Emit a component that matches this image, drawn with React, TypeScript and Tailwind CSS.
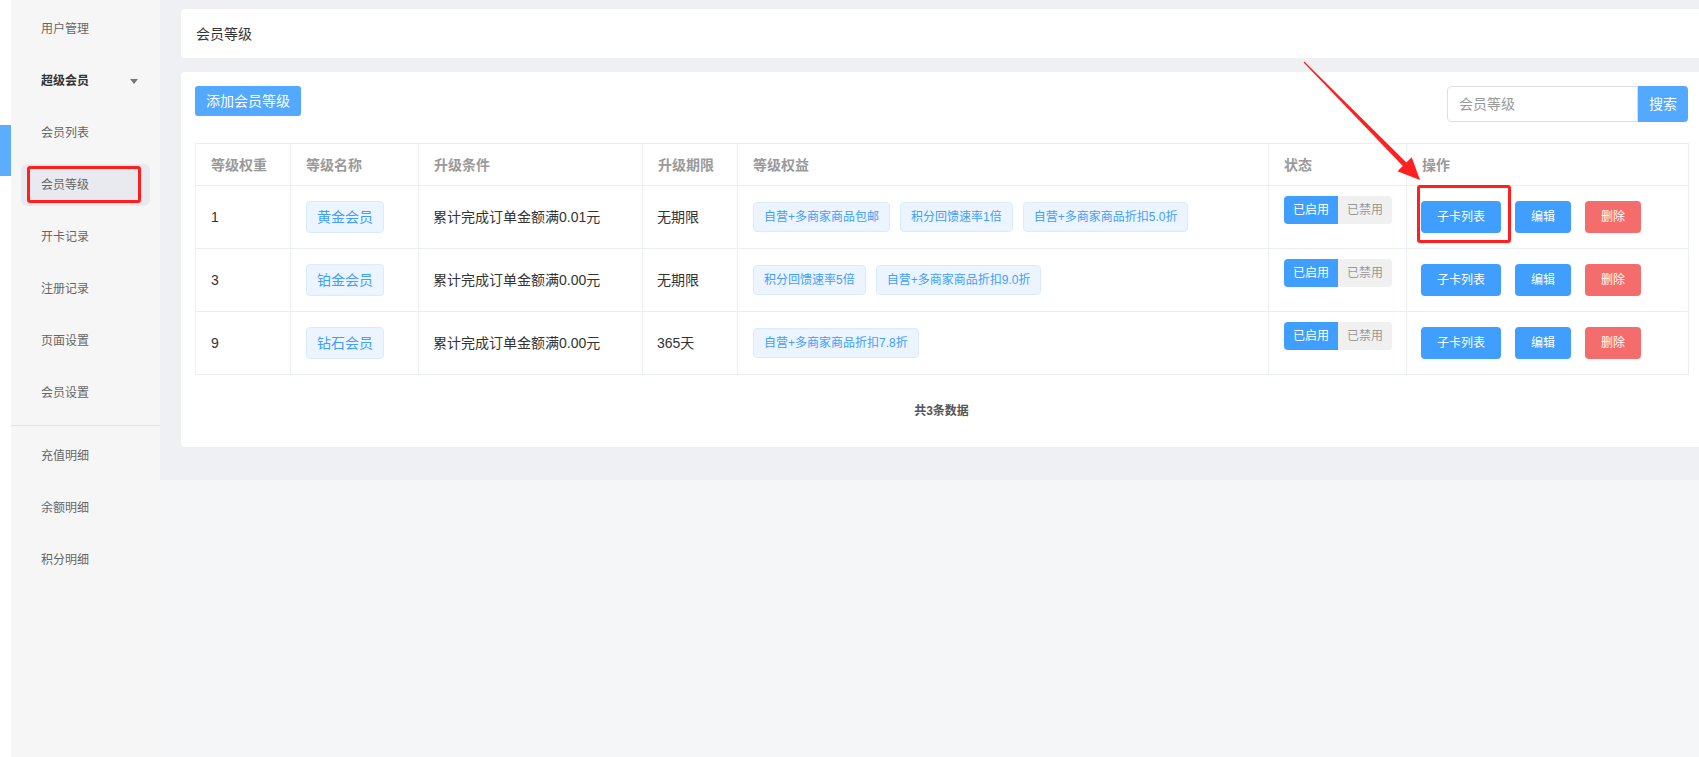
import React from "react";

type Level = {
  weight: string;
  name: string;
  condition: string;
  period: string;
  benefits: string[];
};

const levels: Level[] = [
  {
    weight: "1",
    name: "黄金会员",
    condition: "累计完成订单金额满0.01元",
    period: "无期限",
    benefits: ["自营+多商家商品包邮", "积分回馈速率1倍", "自营+多商家商品折扣5.0折"],
  },
  {
    weight: "3",
    name: "铂金会员",
    condition: "累计完成订单金额满0.00元",
    period: "无期限",
    benefits: ["积分回馈速率5倍", "自营+多商家商品折扣9.0折"],
  },
  {
    weight: "9",
    name: "钻石会员",
    condition: "累计完成订单金额满0.00元",
    period: "365天",
    benefits: ["自营+多商家商品折扣7.8折"],
  },
];

const topMenu = ["用户管理", "超级会员", "会员列表", "会员等级", "开卡记录", "注册记录", "页面设置", "会员设置"];
const bottomMenu = ["充值明细", "余额明细", "积分明细"];

const columns = [
  { label: "等级权重", width: 95 },
  { label: "等级名称", width: 128 },
  { label: "升级条件", width: 224 },
  { label: "升级期限", width: 95 },
  { label: "等级权益", width: 531 },
  { label: "状态", width: 138 },
  { label: "操作", width: 282 },
];

function MenuItem({ label }: { label: string }) {
  const isGroup = label === "超级会员";
  const isActive = label === "会员等级";

  return (
    <div className="flex h-[52px] items-center">
      <div
        className={`relative ml-[10px] flex h-[42px] w-[129px] items-center justify-between rounded-[6px] pl-[20px] pr-[12px] text-[12px] leading-[16px] ${
          isGroup ? "font-bold text-[#333]" : "text-[#666]"
        } ${isActive ? "bg-[#e9eaef] text-[#333]" : ""}`}
      >
        <span>{label}</span>
        {isGroup && (
          <svg width="8" height="5" viewBox="0 0 8 5" aria-hidden="true">
            <path d="M0 0h8L4 5z" fill="#777" />
          </svg>
        )}
        {isActive && (
          <span className="pointer-events-none absolute left-[6px] top-[2px] h-[37px] w-[114px] rounded-[3px] border-[3px] border-[#ff1f1f]" />
        )}
      </div>
    </div>
  );
}

function Sidebar() {
  return (
    <aside className="w-[149px] shrink-0 bg-[#f6f6f7] pt-[3px]">
      {topMenu.map((label) => (
        <MenuItem key={label} label={label} />
      ))}
      <div className="mb-[4px] mt-[6px] h-px bg-[#e2e2e2]" />
      {bottomMenu.map((label) => (
        <MenuItem key={label} label={label} />
      ))}
    </aside>
  );
}

function LevelsTable() {
  return (
    <table className="w-[1493px] table-fixed border-collapse text-left">
      <colgroup>
        {columns.map((col) => (
          <col key={col.label} style={{ width: col.width }} />
        ))}
      </colgroup>
      <thead>
        <tr className="h-[42px]">
          {columns.map((col) => (
            <th
              key={col.label}
              className="border border-[#ebeef5] px-[15px] text-[14px] font-bold leading-[20px] text-[#9a9a9a]"
            >
              {col.label}
            </th>
          ))}
        </tr>
      </thead>
      <tbody className="text-[14px] leading-[20px] text-[#333]">
        {levels.map((level, index) => (
          <tr key={level.name} className="h-[63px]">
            <td className="border border-[#ebeef5] px-[15px]">{level.weight}</td>
            <td className="border border-[#ebeef5] px-[15px]">
              <span className="inline-flex h-[32px] items-center rounded-[4px] border border-[#d9ecff] bg-[#ecf5ff] px-[10px] text-[#409eff]">
                {level.name}
              </span>
            </td>
            <td className="border border-[#ebeef5] px-[14px]">{level.condition}</td>
            <td className="border border-[#ebeef5] px-[14px]">{level.period}</td>
            <td className="border border-[#ebeef5] px-[15px]">
              <div className="flex flex-wrap gap-[10px]">
                {level.benefits.map((benefit) => (
                  <span
                    key={benefit}
                    className="inline-flex h-[30px] items-center rounded-[4px] border border-[#d9ecff] bg-[#ecf5ff] px-[10px] text-[12px] text-[#409eff]"
                  >
                    {benefit}
                  </span>
                ))}
              </div>
            </td>
            <td className="border border-[#ebeef5] px-[15px]">
              <div className="mb-[14px] inline-flex overflow-hidden rounded-[4px] text-[12px]">
                <span className="flex h-[28px] w-[54px] items-center justify-center bg-[#409eff] text-white">
                  已启用
                </span>
                <span className="flex h-[28px] w-[54px] items-center justify-center bg-[#f0f0f0] text-[#999]">
                  已禁用
                </span>
              </div>
            </td>
            <td className="border border-[#ebeef5] px-[14px]">
              <div className="flex gap-[14px] text-[12px] text-white">
                <span className="relative">
                  <button
                    type="button"
                    className="h-[32px] w-[80px] rounded-[4px] bg-[#409eff]"
                  >
                    子卡列表
                  </button>
                  {index === 0 && (
                    <span className="pointer-events-none absolute -left-[4px] -top-[16px] h-[58px] w-[94px] rounded-[3px] border-[3px] border-[#ff1f1f]" />
                  )}
                </span>
                <button type="button" className="h-[32px] w-[56px] rounded-[4px] bg-[#409eff]">
                  编辑
                </button>
                <button type="button" className="h-[32px] w-[56px] rounded-[4px] bg-[#f56c6c]">
                  删除
                </button>
              </div>
            </td>
          </tr>
        ))}
      </tbody>
    </table>
  );
}

export default function App() {
  return (
    <div className="relative flex h-[757px] w-full overflow-hidden bg-white font-['Liberation_Sans','Noto_Sans_CJK_SC',sans-serif]">
      <div className="w-[11px] shrink-0 bg-white">
        <div className="mt-[125px] h-[51px] bg-[#5cadfb]" />
      </div>
      <Sidebar />
      <main className="min-w-0 flex-1 bg-[#f5f6f8]">
        <div className="h-[480px] bg-[#eef0f3] pl-[21px] pt-[9px]">
          <div className="flex h-[49px] items-center rounded-l-[4px] bg-white pl-[15px] text-[14px] leading-[20px] text-[#333]">
            会员等级
          </div>
          <div className="mt-[14px] h-[375px] rounded-l-[4px] bg-white pl-[14px] pr-[11px] pt-[14px]">
            <div className="flex h-[36px] items-start justify-between">
              <button
                type="button"
                className="h-[30px] rounded-[3px] bg-[#53a8ff] px-[11px] text-[14px] leading-[20px] text-white"
              >
                添加会员等级
              </button>
              <div className="flex h-[36px]">
                <input
                  placeholder="会员等级"
                  className="h-[36px] w-[191px] rounded-l-[4px] border border-[#dcdfe6] pl-[11px] text-[14px] text-[#333] outline-none placeholder:text-[#999]"
                />
                <button
                  type="button"
                  className="h-[36px] w-[50px] rounded-r-[4px] bg-[#53a8ff] text-[14px] text-white"
                >
                  搜索
                </button>
              </div>
            </div>
            <div className="mt-[21px]">
              <LevelsTable />
            </div>
            <div className="flex h-[72px] items-center justify-center text-[12px] font-bold text-[#555]">
              共3条数据
            </div>
          </div>
        </div>
      </main>
      <svg
        className="pointer-events-none absolute left-0 top-0"
        width="1699"
        height="757"
        viewBox="0 0 1699 757"
        aria-hidden="true"
      >
        <polygon
          points="1304.4,61.6 1406.4,162.5 1411.7,157.3 1420,180 1397.5,171.3 1402.8,166.1 1303.6,62.4"
          fill="#ff2020"
        />
      </svg>
    </div>
  );
}
